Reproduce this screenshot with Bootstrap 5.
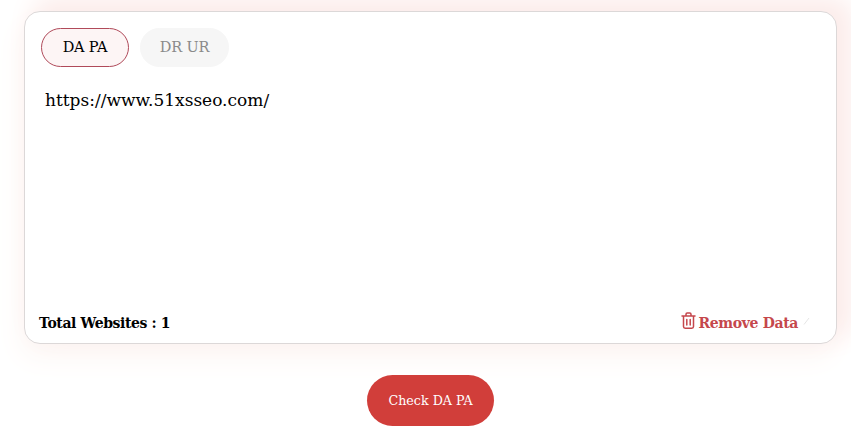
<!DOCTYPE html>
<html lang="en">
<head>
<meta charset="utf-8">
<title>DA PA Checker</title>
<link href="https://cdn.jsdelivr.net/npm/bootstrap@5.3.0/dist/css/bootstrap.min.css" rel="stylesheet">
<style>
html, body { height: 436px; overflow: hidden; }
body { background: #fff; font-family: "DejaVu Serif", "Liberation Serif", serif; color: #000; }
.page-wrap { padding: 11px 14px 0 24px; }
.panel-box { height: 333px; border: 1px solid #dcd8d8; border-radius: 16px; background: #fff;
  box-shadow: 12px -10px 26px 4px #fcecea, -4px 14px 28px 2px #fdf8f6;
  padding: 16px 16px 9px 14px; }
.tab-pill { height: 39px; width: 88px; padding: 0; border-radius: 20px; font-size: 14.5px; line-height: 1; letter-spacing: -.2px; }
.tab-on { background: #fdf5f5; border: 1px solid #b04a5a; color: #000; margin-left: 2px; }
.tab-off { background: #f6f6f6; border: 1px solid #f6f6f6; color: #8a8a8a; width: 89px; margin-left: 3px; }
.url-area { flex: 1 1 auto; border: 0; resize: none; outline: 0; padding: 0 0 0 6px; margin-top: 21px;
  font-size: 17px; line-height: 24px; color: #000; background: transparent; font-family: inherit; }
.foot-total { font-size: 14px; font-weight: 700; color: #000; letter-spacing: -.4px; }
.foot-remove { font-size: 14px; font-weight: 700; color: #c5474c; letter-spacing: -.35px; }
.trash-ico { width: 15px; height: 18px; margin: 0 -2px 4px 0; }
.grip-tick { width: 7px; height: 8px; margin: 0 10px 4px 1px; }
.check-btn { width: 127px; height: 51px; padding: 0; border: 0; border-radius: 26px; background: #d13e3a;
  color: #fff; font-size: 12.7px; }
.check-btn:hover { background: #d13e3a; color: #fff; }
.btn-row { margin-top: 31px; }
</style>
</head>
<body>
<div class="page-wrap">
  <div class="panel-box d-flex flex-column">
    <div class="d-flex gap-2">
      <button type="button" class="btn tab-pill tab-on">DA PA</button>
      <button type="button" class="btn tab-pill tab-off">DR UR</button>
    </div>
    <textarea class="url-area" spellcheck="false">https://www.51xsseo.com/</textarea>
    <div class="d-flex justify-content-between align-items-center">
      <span class="foot-total">Total Websites : 1</span>
      <span class="foot-remove d-flex align-items-center gap-1">
        <svg class="trash-ico" viewBox="0 0 15 18" fill="none" stroke="#c5474c" stroke-width="1.5" stroke-linecap="round" stroke-linejoin="round"><path d="M1 4h13M5 4V2.2C5 1.5 5.5 1 6.2 1h2.6c.7 0 1.2.5 1.2 1.2V4M2.5 4v10.5c0 1 .7 1.7 1.7 1.7h6.6c1 0 1.7-.7 1.7-1.7V4M5.8 7.5v5.5M9.2 7.5v5.5"/></svg>
        Remove Data
        <svg class="grip-tick" viewBox="0 0 7 8" fill="none" stroke="#e6e6e6" stroke-width="1"><path d="M1 7.5 6 1"/></svg>
      </span>
    </div>
  </div>
  <div class="d-flex justify-content-center btn-row">
    <button type="button" class="btn check-btn">Check DA PA</button>
  </div>
</div>
<script src="https://cdn.jsdelivr.net/npm/bootstrap@5.3.0/dist/js/bootstrap.bundle.min.js"></script>
</body>
</html>
